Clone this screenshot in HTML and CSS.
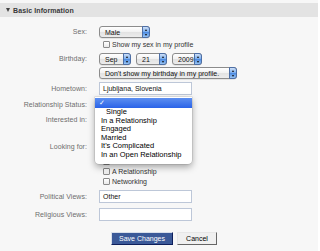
FILE: index.html
```html
<!DOCTYPE html>
<html>
<head>
<meta charset="utf-8">
<link rel="stylesheet" href="styles.css">
</head>
<body>
<div class="panel">
  <div class="header"><span class="tri"></span><span class="htext">Basic Information</span></div>
  <div class="form">
    <div class="row r-sex">
      <div class="label">Sex:</div>
      <div class="field"><span class="select w-sex">Male<i class="cap"></i></span></div>
    </div>
    <div class="row r-sexcheck">
      <div class="label"></div>
      <div class="field"><label class="check"><span class="box"></span>Show my sex in my profile</label></div>
    </div>
    <div class="row r-bday">
      <div class="label">Birthday:</div>
      <div class="field selects">
        <span class="select w-mon">Sep<i class="cap"></i></span>
        <span class="select w-day">21<i class="cap"></i></span>
        <span class="select w-year">2009<i class="cap"></i></span>
      </div>
    </div>
    <div class="row r-dont">
      <div class="label"></div>
      <div class="field"><span class="select w-dont">Don't show my birthday in my profile.<i class="cap"></i></span></div>
    </div>
    <div class="row r-home">
      <div class="label">Hometown:</div>
      <div class="field"><span class="input">Ljubljana, Slovenia</span></div>
    </div>
    <div class="row r-rel">
      <div class="label">Relationship Status:</div>
      <div class="field menu-anchor">
        <span class="select w-rel"><i class="cap"></i></span>
        <div class="menu">
          <div class="mitem active">✓</div>
          <div class="mitem first h8">Single</div>
          <div class="mitem h9">In a Relationship</div>
          <div class="mitem h8">Engaged</div>
          <div class="mitem h9">Married</div>
          <div class="mitem h8">It's Complicated</div>
          <div class="mitem h9">In an Open Relationship</div>
        </div>
      </div>
    </div>
    <div class="row r-int">
      <div class="label top">Interested in:</div>
      <div class="field stack">
        <span class="check line"><span class="box"></span></span>
        <span class="check line"><span class="box"></span></span>
      </div>
    </div>
    <div class="row r-look">
      <div class="label top look">Looking for:</div>
      <div class="field stack">
        <span class="check line"><span class="box"></span></span>
        <span class="check line"><span class="box"></span></span>
        <label class="check line"><span class="box"></span>A Relationship</label>
        <label class="check line"><span class="box"></span>Networking</label>
      </div>
    </div>
    <div class="row r-pol">
      <div class="label">Political Views:</div>
      <div class="field"><span class="input">Other</span></div>
    </div>
    <div class="row r-relig">
      <div class="label">Religious Views:</div>
      <div class="field"><span class="input"></span></div>
    </div>
    <div class="row r-btn">
      <div class="label"></div>
      <div class="field buttons">
        <span class="btn save">Save Changes</span>
        <span class="btn cancel">Cancel</span>
      </div>
    </div>
  </div>
</div>
</body>
</html>
```
FILE: styles.css
```css
html, body {
  margin: 0;
  padding: 0;
  background: #ffffff;
}
body {
  font-family: "Liberation Sans", Arial, sans-serif;
  font-size: 7px;
  color: #333;
}
.panel {
  width: 318px;
  height: 251px;
  background: #f7f7f7;
  box-sizing: border-box;
  padding-top: 3px;
}
.header {
  height: 14px;
  background: #e3e3e3;
  display: flex;
  align-items: center;
  padding-left: 6px;
  font-weight: bold;
  color: #3a3a3a;
  letter-spacing: 0.1px;
}
.tri {
  width: 0;
  height: 0;
  border-left: 2.5px solid transparent;
  border-right: 2.5px solid transparent;
  border-top: 4px solid #444;
  margin-right: 3px;
}
.form {
  display: flex;
  flex-direction: column;
}
.row {
  display: grid;
  grid-template-columns: 87px 1fr;
  column-gap: 12px;
  align-items: center;
}
.label {
  text-align: right;
  color: #6d6d6d;
  letter-spacing: 0.05px;
  line-height: 10px;
}
.label.top {
  align-self: start;
}
.field {
  display: flex;
  align-items: center;
}
.r-sex { margin-top: 9px; height: 12px; }
.r-sexcheck { margin-top: 2px; height: 9px; }
.r-bday { margin-top: 4px; height: 12px; }
.r-dont { margin-top: 2px; height: 12px; }
.r-home { margin-top: 3px; height: 13px; }
.r-rel { margin-top: 4px; height: 12px; position: relative; z-index: 5; }
.r-int { margin-top: 3px; height: 20px; align-items: start; }
.r-int .label { margin-top: 1px; }
.r-look { margin-top: 12px; height: 40px; align-items: start; }
.r-look .label.look { margin-top: -4px; }
.r-pol { margin-top: 4px; height: 13px; }
.r-relig { margin-top: 5px; height: 13px; }
.r-btn { margin-top: 11px; height: 13px; }

.select {
  position: relative;
  box-sizing: border-box;
  height: 12px;
  border: 1px solid #8c8c8c;
  border-radius: 3px;
  background: linear-gradient(#ffffff, #f1f1f1 50%, #e2e2e2 51%, #ececec);
  color: #111;
  padding-left: 5px;
  padding-right: 10px;
  display: flex;
  align-items: center;
  white-space: nowrap;
  box-shadow: 0 0.5px 0.5px rgba(0,0,0,0.15);
}
.cap {
  position: absolute;
  right: -1px;
  top: -1px;
  bottom: -1px;
  width: 8px;
  border: 1px solid #4d6fa6;
  border-radius: 0 3px 3px 0;
  box-sizing: border-box;
  background: linear-gradient(#cfe0f7, #7fb0ee 45%, #4f8de2 55%, #9bc6f4);
}
.cap::before, .cap::after {
  content: "";
  position: absolute;
  left: 1.5px;
  width: 0;
  height: 0;
  border-left: 1.5px solid transparent;
  border-right: 1.5px solid transparent;
}
.cap::before {
  top: 1.5px;
  border-bottom: 2px solid #111;
}
.cap::after {
  bottom: 1.5px;
  border-top: 2px solid #111;
}
.w-sex { width: 51px; }
.w-mon { width: 32px; }
.w-day { width: 31px; }
.w-year { width: 30px; }
.w-dont { width: 138px; }
.w-rel { width: 80px; }
.selects { gap: 5px; }

.input {
  box-sizing: border-box;
  width: 93px;
  height: 13px;
  background: #fff;
  border: 1px solid #bdc7d8;
  color: #111;
  padding-left: 3px;
  display: flex;
  align-items: center;
}

.check {
  display: flex;
  align-items: center;
  margin-left: 4px;
  color: #333;
  white-space: nowrap;
}
.box {
  width: 7px;
  height: 7px;
  box-sizing: border-box;
  border: 1px solid #8a8a8a;
  border-radius: 1px;
  background: linear-gradient(#fff, #e9e9e9);
  margin-right: 2px;
}
.stack {
  flex-direction: column;
  align-items: flex-start;
}
.line {
  height: 10px;
}

.menu-anchor {
  position: relative;
}
.menu {
  position: absolute;
  left: -4px;
  top: -2px;
  width: 97px;
  box-sizing: border-box;
  background: #fff;
  padding: 1px 0 5px;
  border-radius: 0 0 4px 4px;
  box-shadow: 0 3px 7px rgba(0,0,0,0.35), 0 0 0 0.5px rgba(0,0,0,0.15);
  z-index: 5;
  font-size: 7.5px;
  color: #000;
}
.mitem {
  padding-left: 6px;
  white-space: nowrap;
  color: #000;
}
.mitem.h8 { height: 8px; line-height: 8px; }
.mitem.h9 { height: 9px; line-height: 9px; }
.mitem.first {
  padding-left: 11px;
}
.mitem.active {
  height: 10px;
  line-height: 10px;
  padding-left: 4px;
  color: #fff;
  background: linear-gradient(#5d8ff0, #2a63e8);
  font-size: 7px;
}

.buttons {
  gap: 4px;
  padding-left: 12px;
}
.btn {
  box-sizing: border-box;
  height: 13px;
  display: flex;
  align-items: center;
  justify-content: center;
  border: 1px solid;
}
.save {
  width: 62px;
  background: #3b5998;
  color: #fff;
  border-color: #d9dfea #0e1f5b #0e1f5b #d9dfea;
}
.cancel {
  width: 40px;
  background: #f0f0f0;
  color: #000;
  border-color: #e7e7e7 #666 #666 #e7e7e7;
}
```
